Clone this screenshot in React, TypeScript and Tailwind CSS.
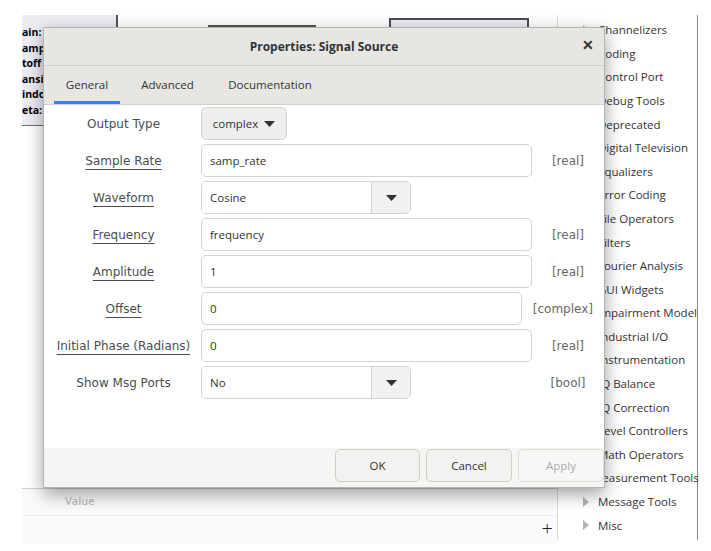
import React from "react";

const blocks = [
  "Channelizers",
  "Coding",
  "Control Port",
  "Debug Tools",
  "Deprecated",
  "Digital Television",
  "Equalizers",
  "Error Coding",
  "File Operators",
  "Filters",
  "Fourier Analysis",
  "GUI Widgets",
  "Impairment Model",
  "Industrial I/O",
  "Instrumentation",
  "IQ Balance",
  "IQ Correction",
  "Level Controllers",
  "Math Operators",
  "Measurement Tools",
  "Message Tools",
  "Misc",
];

const params = ["ain: 1", "ampl", "toff", "ansit", "indo", "eta: 0"];

function Caret() {
  return (
    <svg width="11" height="6" viewBox="0 0 11 6">
      <path d="M0 0 L11 0 L5.5 6 Z" fill="#2e3436" />
    </svg>
  );
}

function Label({ text, link }: { text: string; link?: boolean }) {
  return (
    <div className="w-[139px] shrink-0 text-center font-['DejaVu_Sans'] text-[12px] text-[#4a4d4f]">
      <span className={link ? "underline underline-offset-[4px] decoration-[#4a4d4f]" : ""}>{text}</span>
    </div>
  );
}

function Entry({ value, type }: { value: string; type: string }) {
  return (
    <div className="flex h-[33px] items-center">
      <div className="flex h-full flex-1 items-center rounded-[5px] border border-[#d6d2ce] bg-white pl-[8px] text-[11.5px] text-[#2e3436]">
        {value}
      </div>
      <div className="min-w-[72px] px-[11px] text-center font-['DejaVu_Sans'] text-[12px] text-[#66696b]">
        {type}
      </div>
    </div>
  );
}

function Combo({ value }: { value: string }) {
  return (
    <div className="flex h-[33px] w-[210px] overflow-hidden rounded-[5px] border border-[#d6d2ce]">
      <div className="flex flex-1 items-center bg-white pl-[8px] text-[11.5px] text-[#2e3436]">{value}</div>
      <div className="flex w-[39px] items-center justify-center border-l border-[#d6d2ce] bg-[#f2f1ef]">
        <Caret />
      </div>
    </div>
  );
}

export default function App() {
  return (
    <div className="relative h-[551px] w-[711px] overflow-hidden bg-white font-['Open_Sans'] text-[#2e3436]">
      <div className="flex h-full pl-[22px] pt-[15px]">
        <div className="flex w-[535px] flex-col">
          {/* flowgraph canvas */}
          <div className="relative h-[473px] bg-white">
            <div className="flex h-[111px] w-[96px] flex-col overflow-hidden border-b border-r-2 border-b-[#6a6a6a] border-r-[#555] bg-[#ececf3] pt-[10px] text-[10.5px] font-bold leading-[15.5px] text-black">
              {params.map((p) => (
                <div key={p}>{p}</div>
              ))}
            </div>
            <div className="absolute left-[186px] top-[10px] h-[2px] w-[108px] bg-[#555]" />
            <div className="absolute left-[367px] top-[3px] h-[14px] w-[140px] border-2 border-[#4b4b55] bg-[#ececf3]" />
          </div>
          {/* variables panel */}
          <div className="relative flex h-[56px] flex-col border-t border-[#cfcfcf] bg-[#fafafa]">
            <div className="h-[27px] border-b border-[#eeeeee] pl-[43px] pt-[4px] text-[11px] font-semibold text-[#bdbdbd]">
              Value
            </div>
            <div className="flex flex-1 items-center justify-end pb-[3px] pr-[4px] text-[20px] font-light leading-none text-[#222]">
              +
            </div>
          </div>
        </div>
        {/* block tree */}
        <div className="h-[525px] w-[141px] border-l border-r border-l-[#d9d9d9] border-r-[#8a8a8a] pt-[3px]">
          {blocks.map((b) => (
            <div key={b} className="flex h-[23.6px] items-center pl-[25px]">
              <svg width="6" height="10" viewBox="0 0 6 10">
                <path d="M0 0 L6 5 L0 10 Z" fill="#b4b4b4" />
              </svg>
              <span className="ml-[9px] whitespace-nowrap text-[11.5px] text-[#333]">{b}</span>
            </div>
          ))}
        </div>
      </div>

      {/* properties dialog */}
      <div className="absolute left-[43px] top-[27px] flex h-[461px] w-[562px] flex-col overflow-hidden rounded-t-[2px] border border-[#b5b3b0] bg-white shadow-[0_6px_18px_rgba(0,0,0,0.38)]">
        <div className="relative flex h-[38px] shrink-0 items-center justify-center border-b border-[#d3d0cc] bg-[#e8e6e3]">
          <span className="text-[12px] font-bold text-[#2e3436]">Properties: Signal Source</span>
          <span className="absolute right-[10px] top-[10px] text-[14px] font-bold leading-none text-[#2e3436]">✕</span>
        </div>
        <div className="flex h-[39px] shrink-0 border-b border-[#d3d0cc] bg-[#e8e6e3] pl-[10px] text-[11.5px] text-[#2e3436]">
          <div className="flex w-[66px] flex-col items-center justify-center border-b-[3px] border-[#3584e4] pt-[3px]">General</div>
          <div className="flex w-[95px] items-center justify-center">Advanced</div>
          <div className="flex w-[110px] items-center justify-center">Documentation</div>
        </div>
        <div className="flex flex-1 flex-col gap-[4px] pl-[10px] pt-[2px]">
          <div className="flex h-[33px] items-center gap-[8px]">
            <Label text="Output Type" />
            <div className="flex h-full w-[86px] items-center justify-center gap-[6px] rounded-[5px] border border-[#d6d2ce] bg-[#efeeec] text-[11.5px]">
              complex <Caret />
            </div>
          </div>
          <div className="flex items-center gap-[8px]">
            <Label text="Sample Rate" link />
            <div className="flex-1"><Entry value="samp_rate" type="[real]" /></div>
          </div>
          <div className="flex h-[33px] items-center gap-[8px]">
            <Label text="Waveform" link />
            <Combo value="Cosine" />
          </div>
          <div className="flex items-center gap-[8px]">
            <Label text="Frequency" link />
            <div className="flex-1"><Entry value="frequency" type="[real]" /></div>
          </div>
          <div className="flex items-center gap-[8px]">
            <Label text="Amplitude" link />
            <div className="flex-1"><Entry value="1" type="[real]" /></div>
          </div>
          <div className="flex items-center gap-[8px]">
            <Label text="Offset" link />
            <div className="flex-1"><Entry value="0" type="[complex]" /></div>
          </div>
          <div className="flex items-center gap-[8px]">
            <Label text="Initial Phase (Radians)" link />
            <div className="flex-1"><Entry value="0" type="[real]" /></div>
          </div>
          <div className="flex h-[33px] items-center gap-[8px]">
            <Label text="Show Msg Ports" />
            <Combo value="No" />
            <div className="flex-1" />
            <div className="min-w-[72px] px-[11px] text-center font-['DejaVu_Sans'] text-[12px] text-[#66696b]">[bool]</div>
          </div>
        </div>
        <div className="flex h-[39px] shrink-0 items-start justify-end gap-[6px] bg-[#f6f5f4] pt-[1px] text-[11.5px]">
          <div className="flex h-[33px] w-[85px] items-center justify-center rounded-[5px] border border-[#d0ccc8] bg-[#f3f2f0]">OK</div>
          <div className="flex h-[33px] w-[86px] items-center justify-center rounded-[5px] border border-[#d0ccc8] bg-[#f3f2f0]">Cancel</div>
          <div className="flex h-[33px] w-[86px] items-center justify-center rounded-[5px] border border-[#dedad6] bg-[#f8f7f6] text-[#a9abab]">Apply</div>
        </div>
      </div>
    </div>
  );
}
